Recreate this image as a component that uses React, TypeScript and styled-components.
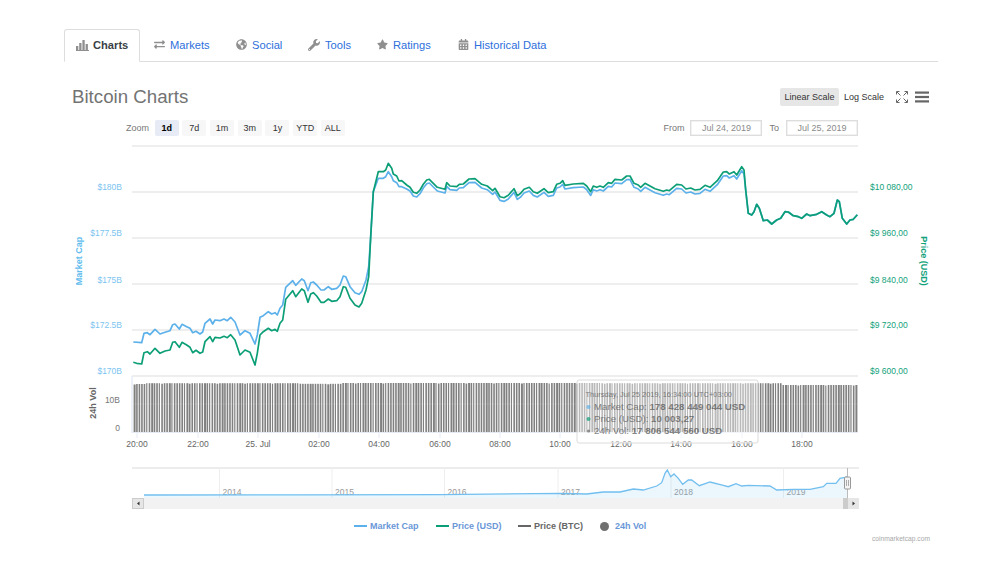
import React from "react";
import styled, { createGlobalStyle } from "styled-components";
import { FaExchangeAlt, FaGlobeAmericas, FaWrench, FaStar, FaCalendarAlt } from "react-icons/fa";

const Global = createGlobalStyle`
  html, body { margin: 0; padding: 0; background: #fff; }
  body { font-family: "Liberation Sans", Arial, sans-serif; }
`;

const Page = styled.div`
  width: 874px;
  height: 535px;
  padding: 29px 62px 0 64px;
  display: flex;
  flex-direction: column;
  overflow: hidden;
`;

const Tabs = styled.nav`
  display: flex;
  height: 32px;
  border-bottom: 1px solid #ddd;
  box-sizing: content-box;
`;

const Tab = styled.a<{ $active?: boolean; $w: number }>`
  display: flex;
  align-items: center;
  gap: ${(p) => (p.$active ? 4 : 5)}px;
  box-sizing: border-box;
  width: ${(p) => p.$w}px;
  height: ${(p) => (p.$active ? 33 : 32)}px;
  padding: 0 0 2px ${(p) => (p.$active ? 11 : 13)}px;
  font-size: 11.15px;
  font-weight: ${(p) => (p.$active ? 700 : 400)};
  color: ${(p) => (p.$active ? "#3a3f47" : "#2d6fdc")};
  background: #fff;
  border: ${(p) => (p.$active ? "1px solid #ddd" : "1px solid transparent")};
  border-bottom: ${(p) => (p.$active ? "1px solid #fff" : "none")};
  border-radius: 3px 3px 0 0;
  svg { color: #8f8f8f; flex: none; }
`;

const Header = styled.header`
  display: flex;
  align-items: center;
  justify-content: space-between;
  height: 20px;
  margin-top: 25px;
  padding-left: 8px;
  width: 872px;
  box-sizing: border-box;
`;

const Title = styled.h2`
  margin: 0;
  font-size: 18.7px;
  line-height: 20px;
  font-weight: 400;
  color: #737373;
`;

const HeaderTools = styled.div`
  display: flex;
  align-items: center;
`;

const ScaleButton = styled.button<{ $active?: boolean }>`
  height: 18px;
  padding: 0;
  width: ${(p) => (p.$active ? 59 : 50)}px;
  margin-right: ${(p) => (p.$active ? 0 : 7)}px;
  border: 0;
  border-radius: 2px;
  font-family: inherit;
  font-size: 9px;
  color: #333;
  background: ${(p) => (p.$active ? "#e6e6e6" : "transparent")};
`;

const IconSlot = styled.span`
  display: flex;
  margin-right: 7px;
`;

const Controls = styled.div`
  display: flex;
  align-items: center;
  justify-content: space-between;
  height: 16px;
  margin-top: 13px;
  padding-left: 62px;
  width: 732px;
`;

const RangeGroup = styled.div`
  display: flex;
  align-items: center;
  gap: 3.7px;
`;

const Label = styled.span`
  font-size: 9px;
  color: #777;
`;

const ZoomLabel = styled(Label)`
  margin-right: 2px;
  width: 23px;
`;

const RangeButton = styled.button<{ $active?: boolean }>`
  width: 24px;
  height: 16px;
  padding: 0;
  border: 0;
  border-radius: 2px;
  font-family: inherit;
  font-size: 9px;
  font-weight: ${(p) => (p.$active ? 700 : 400)};
  color: ${(p) => (p.$active ? "#000" : "#333")};
  background: ${(p) => (p.$active ? "#e6ebf5" : "#f7f7f7")};
`;

const DateGroup = styled.div`
  display: flex;
  align-items: center;
`;

const DateBox = styled.div`
  box-sizing: border-box;
  width: 72px;
  height: 16px;
  margin: 0 0 0 6px;
  border: 1px solid #ddd;
  box-shadow: inset 0 0 0 0.5px #e6e6e6;
  font-size: 9px;
  line-height: 14px;
  text-align: center;
  color: #8a8a8a;
`;

const ToLabel = styled(Label)`
  margin-left: 7px;
  margin-right: 1px;
`;

const ChartSvg = styled.svg`
  display: block;
  width: 874px;
  height: 375px;
  margin-top: 4px;
  font-family: "Liberation Sans", Arial, sans-serif;
  flex: none;
`;

const Legend = styled.div`
  display: flex;
  align-items: center;
  height: 14px;
  margin-top: 4px;
  padding-left: 290px;
`;

const LegendItem = styled.div<{ $w: number }>`
  display: flex;
  align-items: center;
  width: ${(p) => p.$w}px;
  flex: none;
`;

const LegendLine = styled.span<{ $color: string }>`
  width: 13px;
  height: 2px;
  margin-right: 3px;
  background: ${(p) => p.$color};
`;

const LegendDot = styled.span`
  width: 9px;
  height: 9px;
  margin-right: 6px;
  border-radius: 50%;
  background: #707070;
`;

const LegendText = styled.span<{ $color: string }>`
  font-size: 9px;
  font-weight: 700;
  color: ${(p) => p.$color};
  white-space: nowrap;
`;

const Credit = styled.div`
  width: 866px;
  margin-top: 1px;
  text-align: right;
  font-size: 6.7px;
  line-height: 10px;
  color: #a8a8a8;
`;

const z3 = [[40,667],[50,670],[65,672],[72,638],[82,635],[90,642],[105,625],[120,640],[135,633],[150,630],[158,607],[165,605],[178,622],[186,607],[200,615],[210,622],[218,638],[228,631],[240,640],[248,636],[255,605],[270,590],[278,605],[285,592],[300,594],[312,589],[322,593],[332,584],[345,600],[360,645],[375,630],[390,637],[405,675],[412,640],[420,585],[430,575],[445,565],[455,572],[465,568],[472,574],[480,550],[488,540],[497,478],[518,452],[527,470],[545,447],[553,452],[564,487],[572,462],[580,458],[590,468],[603,487],[612,487],[625,477],[635,484],[650,482],[660,470],[670,440],[677,442],[690,475],[705,495],[717,501],[725,490],[738,450],[746,410],[752,290],[760,155],[775,95],[790,95],[797,90],[805,70],[815,85],[820,102],[830,108],[837,123],[845,122],[860,135]];
const z3b = [[40,606],[65,608],[72,580],[82,578],[90,584],[105,568],[120,582],[135,577],[150,572],[158,554],[165,552],[178,567],[186,553],[200,560],[210,565],[218,578],[228,574],[240,582],[248,576],[255,550],[270,537],[278,552],[285,540],[300,542],[312,537],[322,542],[332,532],[345,546],[360,585],[375,572],[390,580],[405,612],[412,585],[420,532],[430,527],[445,515],[455,522],[465,518],[472,525],[480,505],[488,495],[497,442],[518,422],[527,436],[545,417],[553,422],[564,452],[572,428],[580,426],[590,435],[603,450],[612,450],[625,440],[635,448],[650,445],[660,435],[670,408],[677,410],[690,440],[705,458],[717,463],[725,455],[738,420],[746,380],[752,290],[760,155],[775,115],[790,115],[797,110],[805,95],[815,110],[820,122],[830,128],[837,140],[845,140],[860,147]];
const z4 = [[30,112],[40,127],[50,130],[60,120],[70,103],[80,90],[88,88],[100,100],[112,112],[135,118],[140,98],[150,108],[170,110],[178,103],[190,102],[207,87],[225,86],[245,103],[262,108],[278,122],[285,115],[300,140],[312,143],[325,136],[342,116],[352,137],[362,130],[372,118],[388,112],[400,125],[412,130],[432,116],[445,128],[460,125],[470,103],[480,100],[488,92],[495,106],[520,102],[550,100],[560,108],[572,125],[580,108],[590,112],[600,108],[610,112],[625,98],[635,100],[645,88],[665,90],[680,78],[690,78]];
const z5 = [[12,100],[25,105],[32,112],[45,100],[60,108],[75,116],[100,124],[110,120],[118,122],[140,103],[155,105],[168,117],[182,114],[195,120],[210,118],[225,106],[240,112],[262,92],[280,66],[290,65],[298,72],[312,65],[320,75],[335,50],[342,60]];
const z5tail = [[347,120],[355,190],[365,195],[372,185],[380,163],[388,175],[400,212],[412,210],[425,222],[440,210],[452,205],[465,185],[475,186],[490,197],[505,200],[515,205],[530,192],[540,197],[560,193],[575,185],[590,195],[600,200],[612,190],[622,150],[628,155],[637,205],[650,222],[660,210],[670,208],[682,194]];
const nav = [[0,100],[80,102],[130,96],[180,96],[220,87],[250,90],[290,78],[305,68],[315,40],[322,30],[332,50],[342,42],[355,55],[368,73],[385,60],[395,60],[418,77],[450,66],[490,76],[505,80],[528,71],[545,78],[565,76],[630,78],[650,90],[700,88],[750,88],[790,80],[800,70],[828,70],[840,55],[855,52],[862,50]];

const map = (pts: number[][], ox: number, oy: number, dy = 0) =>
  pts.map(([x, y]) => `${(ox + x / 3).toFixed(1)},${(oy + y / 3 + dy).toFixed(1)}`);

const green = [...map(z3, 120, 140), ...map(z4, 400, 150), ...map(z5, 630, 150), ...map(z5tail, 630, 150)].join(" ");
const blue = [...map(z3b, 120, 140), ...map(z4, 400, 150, 3.7), ...map(z5, 630, 150, 4), ...map(z5tail, 630, 150)].join(" ");
const navPts = ["144,495", "300,494.8", "440,494.6", ...map(nav, 560, 460)];
const navArea = navPts.join(" ") + " 847,498 144,498";

const bars = Array.from({ length: 288 }, (_, i) => {
  const x = 133.6 + i * 2.515;
  const wave = x < 145 ? 384 : x < 300 ? 383.2 : x < 340 ? 383.8 : x < 600 ? 383 : x < 780 ? 383.2 : 385;
  const w = i % 7 === 0 ? 2 : i % 5 === 0 ? 1.2 : 1.6;
  return { x, top: wave + (i % 11 === 0 ? 0.5 : 0), w };
});

const grid = [146, 192, 238, 284, 330, 376];
const leftLabels = [["$180B", 190], ["$177.5B", 236], ["$175B", 283], ["$172.5B", 328], ["$170B", 374]] as const;
const rightLabels = [["$10 080,00", 190], ["$9 960,00", 236], ["$9 840,00", 283], ["$9 720,00", 328], ["$9 600,00", 374]] as const;
const times = [["20:00", 137], ["22:00", 198], ["25. Jul", 258], ["02:00", 319], ["04:00", 379], ["06:00", 440], ["08:00", 500], ["10:00", 560], ["12:00", 621], ["14:00", 681], ["16:00", 742], ["18:00", 802]] as const;
const years = [["2014", 219.5], ["2015", 332], ["2016", 444.5], ["2017", 558], ["2018", 671], ["2019", 783.5]] as const;

const BLUE = "#5cb1ea";
const GREEN = "#0c9e77";

const BarsIcon = () => (
  <svg width="13" height="12" viewBox="0 0 13 12" fill="currentColor">
    <rect x="0" y="7" width="2.3" height="4" />
    <rect x="3.2" y="4" width="2.3" height="7" />
    <rect x="6.4" y="1" width="2.3" height="10" />
    <rect x="9.6" y="5" width="2.3" height="6" />
    <rect x="0" y="11" width="13" height="1" />
  </svg>
);

const FullscreenIcon = () => (
  <svg width="12" height="12" viewBox="0 0 12 12" fill="none" stroke="#666" strokeWidth="1">
    <path d="M1 1l3.5 3.5M11 1L7.5 4.5M1 11l3.5-3.5M11 11L7.5 7.5" />
    <path d="M0.5 3.5v-3h3M8.5 0.5h3v3M0.5 8.5v3h3M8.500 11.500h3v-3" />
  </svg>
);

const MenuIcon = () => (
  <svg width="14" height="12" viewBox="0 0 14 12" fill="#666">
    <rect y="0.500" width="14" height="2.200" />
    <rect y="4.900" width="14" height="2.200" />
    <rect y="9.300" width="14" height="2.200" />
  </svg>
);

const Chart = () => (
  <ChartSvg viewBox="64 140 874 375">
    {grid.map((y) => (
      <line key={y} x1="132" x2="858" y1={y} y2={y} stroke="#e9e9e9" strokeWidth="1.300" />
    ))}
    {leftLabels.map(([t, y]) => (
      <text key={t} x="122" y={y} fontSize="8.500" fill="#7cc4f0" textAnchor="end">{t}</text>
    ))}
    {rightLabels.map(([t, y]) => (
      <text key={t} x="870" y={y} fontSize="8.500" fill="#12a27c">{t}</text>
    ))}
    <text transform="translate(82,261) rotate(-90)" fontSize="9" fontWeight="700" fill="#62bdee" textAnchor="middle">Market Cap</text>
    <text transform="translate(921,261) rotate(90)" fontSize="9" fontWeight="700" fill="#12a27c" textAnchor="middle">Price (USD)</text>

    <polyline points={blue} fill="none" stroke={BLUE} strokeWidth="1.700" strokeLinejoin="round" />
    <polyline points={green} fill="none" stroke={GREEN} strokeWidth="1.700" strokeLinejoin="round" />

    <line x1="132" x2="132" y1="376" y2="433" stroke="#e6ebf5" strokeWidth="1.500" />
    <line x1="132" x2="858" y1="432.500" y2="432.500" stroke="#e6ebf5" strokeWidth="1" />
    {bars.map((b) => (
      <rect key={b.x} x={b.x} y={b.top} width={b.w} height={432 - b.top} fill="#808080" />
    ))}
    <line x1="132" x2="858" y1="404" y2="404" stroke="#fff" strokeOpacity="0.12" strokeWidth="1" />
    <text transform="translate(96,403) rotate(-90)" fontSize="9" fontWeight="700" fill="#666" textAnchor="middle">24h Vol</text>
    <text x="120" y="403" fontSize="8.500" fill="#777" textAnchor="end">10B</text>
    <text x="120" y="431" fontSize="8.500" fill="#777" textAnchor="end">0</text>
    {times.map(([t, x]) => (
      <g key={t}>
        <line x1={x} x2={x} y1="433" y2="438" stroke="#e6ebf5" />
        <text x={x} y="447" fontSize="8.500" fill="#666" textAnchor="middle">{t}</text>
      </g>
    ))}

    <rect x="577" y="380" width="181" height="63" rx="2" fill="#fff" fillOpacity="0.45" stroke="#dcdcdc" />
    <g opacity="0.7" fill="#555">
      <text x="585.500" y="397" fontSize="7.450">Thursday, Jul 25 2019, 16:34:00 UTC+03:00</text>
      <circle cx="588.500" cy="407" r="2" fill={BLUE} />
      <text x="594" y="409.500" fontSize="9.700">Market Cap: <tspan fontWeight="700">178 428 449 044 USD</tspan></text>
      <circle cx="588.500" cy="419" r="2" fill={GREEN} />
      <text x="594" y="421.500" fontSize="9.700">Price (USD): <tspan fontWeight="700">10 003,27</tspan></text>
      <circle cx="588.500" cy="431" r="1.500" fill="#666" />
      <text x="594" y="433.500" fontSize="9.700">24h Vol: <tspan fontWeight="700">17 806 544 560 USD</tspan></text>
    </g>

    <line x1="132" x2="859" y1="468" y2="468" stroke="#e6e6e6" strokeWidth="1.300" />
    {years.map(([t, x]) => (
      <g key={t}>
        <line x1={x} x2={x} y1="468" y2="498" stroke="#eeeeee" />
        <text x={x + 3} y="495" fontSize="8.500" fill="#999">{t}</text>
      </g>
    ))}
    <polygon points={navArea} fill="#7cc4f0" fillOpacity="0.150" />
    <polyline points={navPts.join(" ")} fill="none" stroke="#72bfef" strokeWidth="1.300" />
    <line x1="847.500" x2="847.500" y1="468" y2="498" stroke="#bbb" />
    <rect x="844.500" y="477" width="6" height="12" rx="1" fill="#f4f4f4" stroke="#999" />
    <path d="M846.500 480v6M848.500 480v6" stroke="#999" strokeWidth="0.800" />

    <rect x="132" y="498" width="727" height="11" fill="#f2f2f2" />
    <rect x="132.500" y="498.500" width="11" height="10" fill="#e6e6e6" stroke="#ccc" />
    <path d="M139.500 501.500v4l-2.500-2z" fill="#333" />
    <rect x="843" y="498" width="5" height="11" fill="#ccc" />
    <rect x="848" y="498" width="11" height="11" fill="#e6e6e6" />
    <path d="M852.500 501.500v4l2.500-2z" fill="#333" />
  </ChartSvg>
);

export default function App() {
  return (
    <Page>
      <Global />
      <Tabs>
        <Tab $active $w={76}><BarsIcon /><span>Charts</span></Tab>
        <Tab $w={82}><FaExchangeAlt size={11} /><span>Markets</span></Tab>
        <Tab $w={72}><FaGlobeAmericas size={11} /><span>Social</span></Tab>
        <Tab $w={69}><FaWrench size={12} /><span>Tools</span></Tab>
        <Tab $w={81}><FaStar size={11} /><span>Ratings</span></Tab>
        <Tab $w={110}><FaCalendarAlt size={11} /><span>Historical Data</span></Tab>
      </Tabs>
      <Header>
        <Title>Bitcoin Charts</Title>
        <HeaderTools>
          <ScaleButton $active>Linear Scale</ScaleButton>
          <ScaleButton>Log Scale</ScaleButton>
          <IconSlot><FullscreenIcon /></IconSlot>
          <IconSlot><MenuIcon /></IconSlot>
        </HeaderTools>
      </Header>
      <Controls>
        <RangeGroup>
          <ZoomLabel>Zoom</ZoomLabel>
          <RangeButton $active>1d</RangeButton>
          <RangeButton>7d</RangeButton>
          <RangeButton>1m</RangeButton>
          <RangeButton>3m</RangeButton>
          <RangeButton>1y</RangeButton>
          <RangeButton>YTD</RangeButton>
          <RangeButton>ALL</RangeButton>
        </RangeGroup>
        <DateGroup>
          <Label>From</Label>
          <DateBox>Jul 24, 2019</DateBox>
          <ToLabel>To</ToLabel>
          <DateBox>Jul 25, 2019</DateBox>
        </DateGroup>
      </Controls>
      <Chart />
      <Legend>
        <LegendItem $w={82}><LegendLine $color="#5cb1ea" /><LegendText $color="#6a97d8">Market Cap</LegendText></LegendItem>
        <LegendItem $w={82}><LegendLine $color="#0c9e77" /><LegendText $color="#6a97d8">Price (USD)</LegendText></LegendItem>
        <LegendItem $w={82}><LegendLine $color="#666" /><LegendText $color="#666">Price (BTC)</LegendText></LegendItem>
        <LegendItem $w={60}><LegendDot /><LegendText $color="#6a97d8">24h Vol</LegendText></LegendItem>
      </Legend>
      <Credit>coinmarketcap.com</Credit>
    </Page>
  );
}
